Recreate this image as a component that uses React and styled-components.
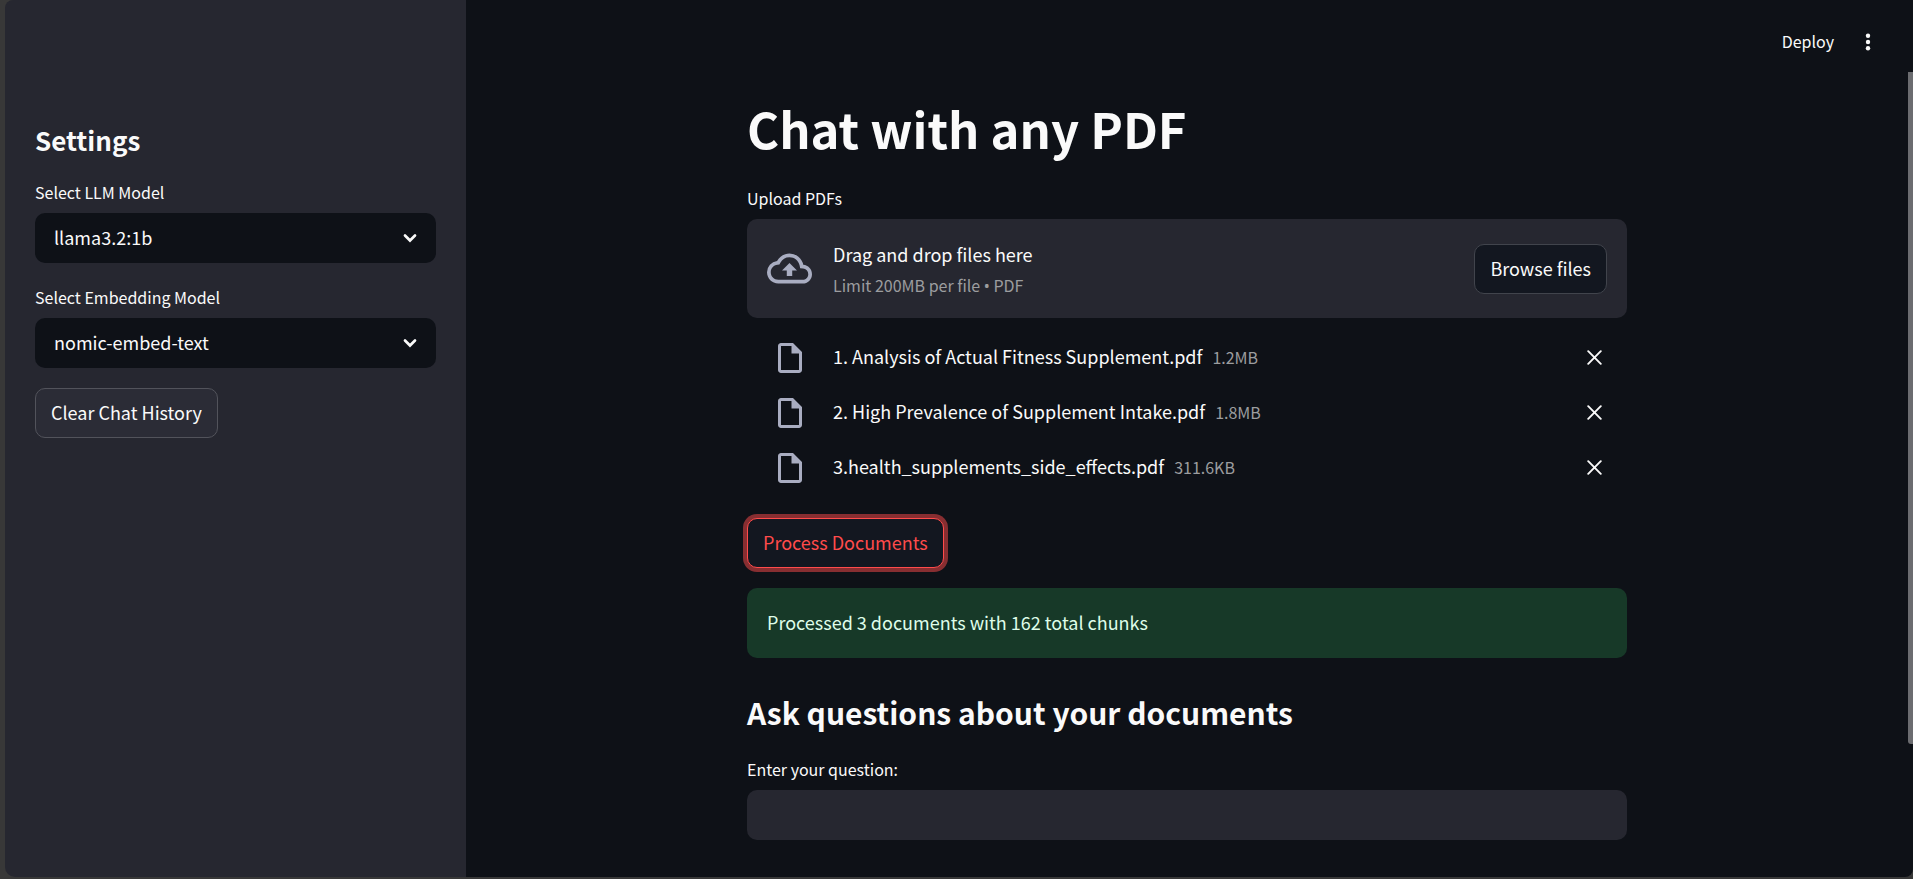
import React, { useState } from "react";
import styled, { createGlobalStyle } from "styled-components";

const GlobalStyle = createGlobalStyle`
  *, *::before, *::after { box-sizing: border-box; }
  body {
    margin: 0;
    background: #383838;
    color: #fafafa;
    font-family: "Noto Sans CJK SC", "Noto Sans", sans-serif;
    font-size: 18px;
  }
  button, input, select { font: inherit; color: inherit; }
  h1, h2, ul, p { margin: 0; padding: 0; }
`;

const Page = styled.div`
  display: flex;
  min-height: 100vh;
  padding: 0 0 2px 5px;
`;

const Sidebar = styled.aside`
  flex: 0 0 461px;
  display: flex;
  flex-direction: column;
  align-items: stretch;
  gap: 20px;
  padding: 122px 30px 20px;
  background: #262730;
  border-radius: 8px 0 0 10px;
`;

const SidebarTitle = styled.h2`
  font-size: 26px;
  line-height: 36px;
  font-weight: 700;
`;

const Field = styled.div`
  display: flex;
  flex-direction: column;
  gap: 6px;
`;

const Label = styled.label`
  font-size: 16px;
  line-height: 29px;
`;

const SelectWrap = styled.div`
  position: relative;
`;

const Select = styled.select`
  appearance: none;
  display: block;
  width: 100%;
  height: 50px;
  padding: 0 48px 2px 19px;
  border: 0;
  border-radius: 10px;
  background: #0e1117;
  cursor: pointer;
`;

const Chevron = styled.svg`
  position: absolute;
  right: 16px;
  top: 15px;
  pointer-events: none;
`;

const Button = styled.button`
  align-self: ${(p) => (p.$centered ? "center" : "flex-start")};
  flex: none;
  height: 50px;
  padding: 0 15px 2px;
  border: 1px solid ${(p) => (p.$active ? "#ff4b4b" : p.$raised ? "#52535b" : "#41444c")};
  border-radius: 10px;
  background: ${(p) => (p.$raised ? "#2b2c36" : "#131720")};
  color: ${(p) => (p.$active ? "#ff4b4b" : "#fafafa")};
  box-shadow: ${(p) => (p.$active ? "0 0 0 4px rgba(255, 75, 75, 0.5)" : "none")};
  white-space: nowrap;
  cursor: pointer;
`;

const Main = styled.div`
  flex: 1;
  min-width: 0;
  display: flex;
  flex-direction: column;
  background: #0e1117;
  border-radius: 0 0 8px 0;
`;

const Header = styled.header`
  display: flex;
  justify-content: flex-end;
  align-items: center;
  gap: 16px;
  height: 72px;
  padding: 12px 28px 0 0;
`;

const HeaderButton = styled.button`
  display: flex;
  align-items: center;
  justify-content: center;
  min-width: 35px;
  height: 36px;
  padding: 0;
  border: 0;
  background: none;
  font-size: 16px;
  cursor: pointer;
`;

const DeployButton = styled(HeaderButton)`
  padding-bottom: 2px;
`;

const Body = styled.div`
  flex: 1;
  display: flex;
`;

const Content = styled.main`
  flex: 1;
  min-width: 0;
  display: flex;
  flex-direction: column;
  gap: 20px;
  max-width: 920px;
  margin: 0 auto;
  padding: 20px 20px 36px;
`;

const ScrollRail = styled.div`
  flex: 0 0 5px;
`;

const ScrollThumb = styled.div`
  height: 83.5%;
  background: #6b6c70;
  border-radius: 0 0 0 3px;
`;

const Title = styled.h1`
  font-size: 49px;
  line-height: 72px;
  font-weight: 700;
`;

const SectionTitle = styled.h2`
  padding-top: 12px;
  font-size: 30px;
  line-height: 45px;
  font-weight: 700;
`;

const Uploader = styled(Field)`
  gap: 6px;
`;

const Dropzone = styled.div`
  display: flex;
  align-items: center;
  gap: 21px;
  padding: 20px;
  border-radius: 10px;
  background: #262730;
`;

const DropText = styled.div`
  flex: 1;
  line-height: 31px;
`;

const Muted = styled.span`
  font-size: 16px;
  line-height: 26px;
  color: #9c9d9f;
`;

const DropHint = styled(Muted)`
  display: block;
  padding-top: 2px;
`;

const Bullet = styled.span`
  font-family: "Noto Sans", sans-serif;
  line-height: 1;
`;

const FileList = styled.ul`
  list-style: none;
  && { padding: 6px 20px 3px; }
`;

const FileRow = styled.li`
  display: flex;
  align-items: center;
  gap: 21px;
  height: 55px;
`;

const IconSlot = styled.span`
  flex: 0 0 45px;
  display: flex;
  justify-content: center;
  color: #a9adc1;
`;

const FileInfo = styled.div`
  flex: 1;
  min-width: 0;
  display: flex;
  align-items: baseline;
  gap: 10px;
  padding-bottom: 2px;
`;

const RemoveButton = styled.button`
  display: flex;
  align-items: center;
  justify-content: center;
  width: 25px;
  height: 25px;
  padding: 0;
  border: 0;
  background: none;
  cursor: pointer;
`;

const Alert = styled.div`
  padding: 19px 20px 21px;
  border-radius: 10px;
  background: #173928;
  color: #dffde9;
  line-height: 30px;
`;

const TextInput = styled.input`
  width: 100%;
  height: 50px;
  padding: 0 18px;
  border: 0;
  border-radius: 10px;
  background: #262730;
  outline: none;
`;

function SelectField({ id, label, options }) {
  const [value, setValue] = useState(options[0]);
  return (
    <Field>
      <Label htmlFor={id}>{label}</Label>
      <SelectWrap>
        <Select id={id} value={value} onChange={(e) => setValue(e.target.value)}>
          {options.map((o) => (
            <option key={o}>{o}</option>
          ))}
        </Select>
        <Chevron width="20" height="20" viewBox="0 0 20 20" fill="none" aria-hidden="true">
          <path d="M5 7.5l5 5 5-5" stroke="#fafafa" strokeWidth="2.7" strokeLinecap="round" />
        </Chevron>
      </SelectWrap>
    </Field>
  );
}

const CloudIcon = () => (
  <svg width="45" height="45" viewBox="0 0 24 24" fill="currentColor" aria-hidden="true">
    <path d="M19.35 10.04A7.49 7.49 0 0012 4C9.11 4 6.6 5.64 5.35 8.04A5.994 5.994 0 000 14c0 3.31 2.69 6 6 6h13c2.76 0 5-2.24 5-5 0-2.64-2.05-4.78-4.65-4.96zM19 18H6c-2.21 0-4-1.79-4-4 0-2.05 1.53-3.76 3.56-3.97l1.07-.11.5-.95A5.469 5.469 0 0112 6c2.62 0 4.88 1.86 5.39 4.43l.3 1.5 1.53.11A2.98 2.98 0 0122 15c0 1.65-1.35 3-3 3zM8 13h2.55v3h2.9v-3H16l-4-4z" />
  </svg>
);

const FileIcon = () => (
  <svg width="36" height="36" viewBox="0 0 24 24" fill="currentColor" aria-hidden="true">
    <path d="M14 2H6c-1.1 0-2 .9-2 2v16c0 1.1.9 2 2 2h12c1.1 0 2-.9 2-2V8l-6-6zM6 20V4h7v5h5v11H6z" />
  </svg>
);

const CloseIcon = () => (
  <svg width="15" height="15" viewBox="0 0 15 15" fill="none" aria-hidden="true">
    <path d="M1.2 1.2l12.6 12.6M13.8 1.2L1.2 13.8" stroke="currentColor" strokeWidth="1.9" strokeLinecap="round" />
  </svg>
);

const MoreIcon = () => (
  <svg width="6" height="18" viewBox="0 0 6 18" fill="currentColor" aria-hidden="true">
    <circle cx="3" cy="2.7" r="2.2" />
    <circle cx="3" cy="9" r="2.2" />
    <circle cx="3" cy="15.3" r="2.2" />
  </svg>
);

const initialFiles = [
  { name: "1. Analysis of Actual Fitness Supplement.pdf", size: "1.2MB" },
  { name: "2. High Prevalence of Supplement Intake.pdf", size: "1.8MB" },
  { name: "3.health_supplements_side_effects.pdf", size: "311.6KB" },
];

export default function App() {
  const [files, setFiles] = useState(initialFiles);
  const [question, setQuestion] = useState("");

  return (
    <>
      <GlobalStyle />
      <Page>
        <Sidebar>
          <SidebarTitle>Settings</SidebarTitle>
          <SelectField id="llm" label="Select LLM Model" options={["llama3.2:1b"]} />
          <SelectField id="embedding" label="Select Embedding Model" options={["nomic-embed-text"]} />
          <Button type="button" $raised>Clear Chat History</Button>
        </Sidebar>
        <Main>
          <Header>
            <DeployButton type="button">Deploy</DeployButton>
            <HeaderButton type="button" aria-label="Main menu">
              <MoreIcon />
            </HeaderButton>
          </Header>
          <Body>
            <Content>
              <Title>Chat with any PDF</Title>
              <Uploader>
                <Label as="span" id="upload-label">Upload PDFs</Label>
                <Dropzone role="group" aria-labelledby="upload-label">
                  <IconSlot>
                    <CloudIcon />
                  </IconSlot>
                  <DropText>
                    Drag and drop files here
                    <DropHint>
                      Limit 200MB per file <Bullet>•</Bullet> PDF
                    </DropHint>
                  </DropText>
                  <Button type="button" $centered>Browse files</Button>
                </Dropzone>
                <FileList>
                  {files.map((f) => (
                    <FileRow key={f.name}>
                      <IconSlot>
                        <FileIcon />
                      </IconSlot>
                      <FileInfo>
                        <span>{f.name}</span>
                        <Muted>{f.size}</Muted>
                      </FileInfo>
                      <RemoveButton
                        type="button"
                        aria-label={`Remove ${f.name}`}
                        onClick={() => setFiles(files.filter((x) => x !== f))}
                      >
                        <CloseIcon />
                      </RemoveButton>
                    </FileRow>
                  ))}
                </FileList>
              </Uploader>
              <Button type="button" $active>Process Documents</Button>
              <Alert role="status">Processed 3 documents with 162 total chunks</Alert>
              <SectionTitle>Ask questions about your documents</SectionTitle>
              <Field>
                <Label htmlFor="question">Enter your question:</Label>
                <TextInput
                  id="question"
                  type="text"
                  value={question}
                  onChange={(e) => setQuestion(e.target.value)}
                />
              </Field>
            </Content>
            <ScrollRail aria-hidden="true">
              <ScrollThumb />
            </ScrollRail>
          </Body>
        </Main>
      </Page>
    </>
  );
}
